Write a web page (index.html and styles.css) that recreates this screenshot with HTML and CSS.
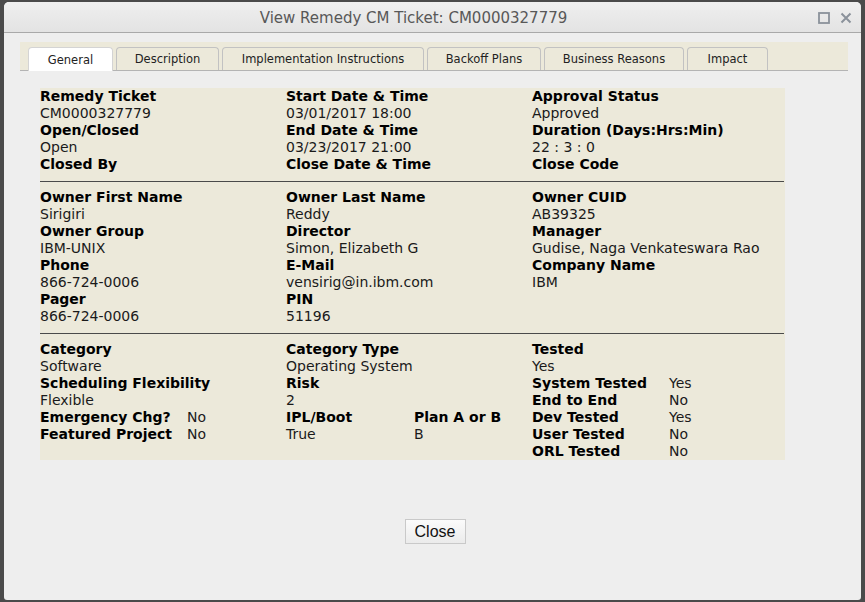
FILE: index.html
```html
<!DOCTYPE html>
<html>
<head>
<meta charset="utf-8">
<link rel="stylesheet" href="styles.css">
</head>
<body>
<div class="dialog">
  <div class="titlebar">
    <span class="title">View Remedy CM Ticket: CM0000327779</span>
    <div class="win-icons">
      <svg width="12" height="12" viewBox="0 0 12 12"><rect x="1" y="1" width="10" height="10" fill="none" stroke="#8b929b" stroke-width="1.8"/></svg>
      <svg width="12" height="12" viewBox="0 0 12 12"><path d="M1.5 1.5L10.5 10.5M10.5 1.5L1.5 10.5" stroke="#8b929b" stroke-width="2"/></svg>
    </div>
  </div>
  <div class="body">
    <div class="tabstrip">
      <div class="tab active t1">General</div>
      <div class="tab t2">Description</div>
      <div class="tab t3">Implementation Instructions</div>
      <div class="tab t4">Backoff Plans</div>
      <div class="tab t5">Business Reasons</div>
      <div class="tab t6">Impact</div>
    </div>
    <div class="panel">
      <div class="grid3">
        <div class="lbl">Remedy Ticket</div><div class="lbl">Start Date &amp; Time</div><div class="lbl">Approval Status</div>
        <div class="val">CM0000327779</div><div class="val">03/01/2017 18:00</div><div class="val">Approved</div>
        <div class="lbl">Open/Closed</div><div class="lbl">End Date &amp; Time</div><div class="lbl">Duration (Days:Hrs:Min)</div>
        <div class="val">Open</div><div class="val">03/23/2017 21:00</div><div class="val">22 : 3 : 0</div>
        <div class="lbl">Closed By</div><div class="lbl">Close Date &amp; Time</div><div class="lbl">Close Code</div>
      </div>
      <div class="sep"></div>
      <div class="grid3">
        <div class="lbl">Owner First Name</div><div class="lbl">Owner Last Name</div><div class="lbl">Owner CUID</div>
        <div class="val">Sirigiri</div><div class="val">Reddy</div><div class="val">AB39325</div>
        <div class="lbl">Owner Group</div><div class="lbl">Director</div><div class="lbl">Manager</div>
        <div class="val">IBM-UNIX</div><div class="val">Simon, Elizabeth G</div><div class="val">Gudise, Naga Venkateswara Rao</div>
        <div class="lbl">Phone</div><div class="lbl">E-Mail</div><div class="lbl">Company Name</div>
        <div class="val">866-724-0006</div><div class="val">vensirig@in.ibm.com</div><div class="val">IBM</div>
        <div class="lbl">Pager</div><div class="lbl">PIN</div><div class="val"></div>
        <div class="val">866-724-0006</div><div class="val">51196</div><div class="val"></div>
      </div>
      <div class="sep"></div>
      <div class="grid6">
        <div class="lbl s2">Category</div><div class="lbl s2">Category Type</div><div class="lbl s2">Tested</div>
        <div class="val s2">Software</div><div class="val s2">Operating System</div><div class="val s2">Yes</div>
        <div class="lbl s2">Scheduling Flexibility</div><div class="lbl s2">Risk</div><div class="lbl">System Tested</div><div class="val">Yes</div>
        <div class="val s2">Flexible</div><div class="val s2">2</div><div class="lbl">End to End</div><div class="val">No</div>
        <div class="lbl">Emergency Chg?</div><div class="val">No</div><div class="lbl">IPL/Boot</div><div class="lbl">Plan A or B</div><div class="lbl">Dev Tested</div><div class="val">Yes</div>
        <div class="lbl">Featured Project</div><div class="val">No</div><div class="val">True</div><div class="val">B</div><div class="lbl">User Tested</div><div class="val">No</div>
        <div class="val s2"></div><div class="val s2"></div><div class="lbl">ORL Tested</div><div class="val">No</div>
      </div>
    </div>
    <div class="actions">
      <button class="btn">Close</button>
    </div>
  </div>
</div>
</body>
</html>
```

FILE: styles.css
```css
html, body {
  margin: 0;
  padding: 0;
  background: #4a4a4a;
  height: 602px;
  overflow: hidden;
}
.dialog {
  margin: 2px 4px 0 4px;
  width: 857px;
  height: 598px;
  background: #eeeeee;
  border-radius: 5px 5px 3px 3px;
  overflow: hidden;
  display: flex;
  flex-direction: column;
  font-family: "DejaVu Sans", Verdana, sans-serif;
}
.titlebar {
  height: 30px;
  background: linear-gradient(#efefef, #e3e3e3);
  border-bottom: 1px solid #a9a9a9;
  display: flex;
  align-items: center;
  justify-content: center;
  position: relative;
}
.title {
  font-size: 15px;
  color: #585858;
  margin-left: -38px;
  margin-top: 1px;
}
.win-icons {
  position: absolute;
  right: 9px;
  top: 10px;
  display: flex;
  gap: 10px;
}
.body {
  flex: 1;
  display: flex;
  flex-direction: column;
  padding: 9px 13px 0 16px;
}
.tabstrip {
  background: #ece9da;
  height: 28px;
  border-bottom: 1px solid #b4b4b4;
  display: flex;
  align-items: flex-end;
  padding-left: 8px;
  gap: 3px;
}
.tab {
  height: 23px;
  box-sizing: border-box;
  border: 1px solid #c2c2c2;
  border-bottom: none;
  border-radius: 4px 4px 0 0;
  background: #ece9da;
  font-size: 11.5px;
  color: #222;
  display: flex;
  align-items: center;
  justify-content: center;
}
.tab.active {
  background: #ffffff;
  height: 24px;
  margin-bottom: -1px;
  border-color: #d4d4d4;
}
.t1 { width: 85px; }
.t2 { width: 103px; }
.t3 { width: 202px; }
.t4 { width: 114px; }
.t5 { width: 140px; }
.t6 { width: 81px; }
.panel {
  margin: 17px 0 0 20px;
  width: 745px;
  background: #ece9da;
  font-size: 14px;
  line-height: 17px;
  color: #111;
}
.grid3 {
  display: grid;
  grid-template-columns: 246px 246px 1fr;
}
.grid6 {
  display: grid;
  grid-template-columns: 147px 99px 128px 118px 137px 1fr;
}
.s2 { grid-column: span 2; }
.lbl {
  font-weight: bold;
  color: #000;
  white-space: nowrap;
  height: 17px;
}
.val {
  color: #1a1a1a;
  white-space: nowrap;
  height: 17px;
}
.sep {
  height: 1px;
  background: #4a4a4a;
  margin: 8px 0 7px 0;
  width: 744px;
}
.actions {
  display: flex;
  justify-content: center;
  margin-top: 59px;
  padding-left: 2px;
}
.btn {
  width: 61px;
  height: 25px;
  font-family: "Liberation Sans", Arial, sans-serif;
  font-size: 16px;
  color: #111;
  background: linear-gradient(#fbfbfb, #ebebeb);
  border: 1px solid #c9c9c9;
  border-radius: 0;
  padding: 0;
}
```
